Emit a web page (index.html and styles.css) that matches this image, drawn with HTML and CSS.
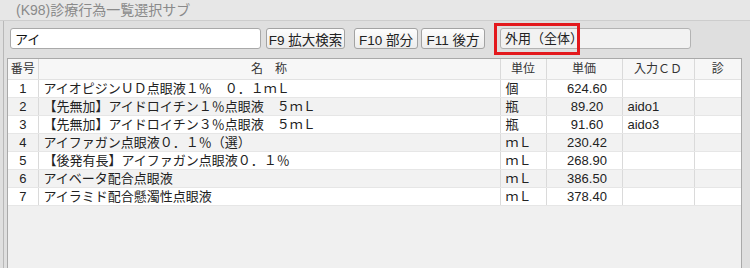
FILE: index.html
```html
<!DOCTYPE html>
<html lang="ja">

<head>
    <meta charset="UTF-8">
    <title>(K98)診療行為一覧選択サブ</title>
    <link rel="stylesheet" href="styles.css">
</head>

<body>
    <div class="window">
        <div class="titlebar">(K98)診療行為一覧選択サブ</div>
        <div class="main">
            <div class="toolbar">
                <input class="search" type="text" value="アイ">
                <button class="btn btn-f9">F9 拡大検索</button>
                <button class="btn btn-f10">F10 部分</button>
                <button class="btn btn-f11">F11 後方</button>
                <div class="scope">
                    <div class="scope-field">外用（全体）</div>
                    <div class="mark"></div>
                </div>
            </div>
            <div class="list">
                <table>
                    <colgroup>
                        <col class="c-no">
                        <col class="c-name">
                        <col class="c-unit">
                        <col class="c-price">
                        <col class="c-code">
                        <col class="c-shin">
                    </colgroup>
                    <thead>
                        <tr>
                            <th>番号</th>
                            <th>名　称</th>
                            <th>単位</th>
                            <th>単価</th>
                            <th>入力ＣＤ</th>
                            <th>診</th>
                        </tr>
                    </thead>
                    <tbody>
                        <tr>
                            <td class="no">1</td>
                            <td>アイオピジンＵＤ点眼液１％　０．１ｍＬ</td>
                            <td>個</td>
                            <td class="price">624.60</td>
                            <td></td>
                            <td></td>
                        </tr>
                        <tr>
                            <td class="no">2</td>
                            <td>【先無加】アイドロイチン１％点眼液　５ｍＬ</td>
                            <td>瓶</td>
                            <td class="price">89.20</td>
                            <td>aido1</td>
                            <td></td>
                        </tr>
                        <tr>
                            <td class="no">3</td>
                            <td>【先無加】アイドロイチン３％点眼液　５ｍＬ</td>
                            <td>瓶</td>
                            <td class="price">91.60</td>
                            <td>aido3</td>
                            <td></td>
                        </tr>
                        <tr>
                            <td class="no">4</td>
                            <td>アイファガン点眼液０．１％（選）</td>
                            <td>ｍＬ</td>
                            <td class="price">230.42</td>
                            <td></td>
                            <td></td>
                        </tr>
                        <tr>
                            <td class="no">5</td>
                            <td>【後発有長】アイファガン点眼液０．１％</td>
                            <td>ｍＬ</td>
                            <td class="price">268.90</td>
                            <td></td>
                            <td></td>
                        </tr>
                        <tr>
                            <td class="no">6</td>
                            <td>アイベータ配合点眼液</td>
                            <td>ｍＬ</td>
                            <td class="price">386.50</td>
                            <td></td>
                            <td></td>
                        </tr>
                        <tr>
                            <td class="no">7</td>
                            <td>アイラミド配合懸濁性点眼液</td>
                            <td>ｍＬ</td>
                            <td class="price">378.40</td>
                            <td></td>
                            <td></td>
                        </tr>
                    </tbody>
                </table>
            </div>
        </div>
    </div>
</body>

</html>
```

FILE: styles.css
```css
body {
    margin: 0;
    padding: 0;
    width: 750px;
    height: 268px;
    overflow: hidden;
    background-color: #dfdfdf;
    font-family: "Liberation Sans", "Noto Sans CJK JP", sans-serif;
    color: #222;
}

.window {
    display: flex;
    flex-direction: column;
    height: 268px;
}

.titlebar {
    height: 20px;
    line-height: 20px;
    padding-left: 16px;
    font-size: 14px;
    color: #8a8a8a;
    background-color: #e7e7e7;
    border-bottom: 1px solid #cdcdcd;
}

.main {
    flex: 1;
    display: flex;
    flex-direction: column;
    margin-left: 3px;
    border-left: 1px solid #b8b8b8;
    min-height: 0;
}

.toolbar {
    display: flex;
    align-items: center;
    height: 21px;
    margin-top: 7px;
    padding-left: 6px;
}

.search {
    box-sizing: border-box;
    width: 251px;
    height: 21px;
    margin: 0;
    padding: 0 4px;
    border: 1px solid #a9a9a9;
    border-radius: 3px;
    background-color: white;
    font-family: "Liberation Sans", "Noto Sans CJK JP", sans-serif;
    font-size: 13px;
    color: #111;
}

.btn {
    box-sizing: border-box;
    height: 21px;
    margin: 0;
    padding: 0;
    border: 1px solid #a3a3a3;
    border-radius: 3px;
    background: linear-gradient(#fdfdfd, #ececec);
    font-family: "Liberation Sans", "Noto Sans CJK JP", sans-serif;
    font-size: 13.5px;
    color: #222;
}

.btn-f9 {
    width: 79px;
    margin-left: 5px;
}

.btn-f10 {
    width: 64px;
    margin-left: 9px;
}

.btn-f11 {
    width: 64px;
    margin-left: 3px;
}

.scope {
    position: relative;
    margin-left: 15px;
}

.scope-field {
    box-sizing: border-box;
    width: 191px;
    height: 21px;
    line-height: 19px;
    padding-left: 4px;
    border: 1px solid #b3b3b3;
    border-radius: 3px;
    background-color: #f2f2f2;
    font-size: 13px;
    color: #222;
}

.mark {
    position: absolute;
    left: -6px;
    top: -5px;
    width: 86px;
    height: 32px;
    box-sizing: border-box;
    border: 3px solid #e3191d;
}

.list {
    flex: 1;
    margin: 9px 8px 0 3px;
    border: 1px solid #a9a9a9;
    border-bottom: none;
    background-color: #f0f0f0;
    overflow: hidden;
}

table {
    width: 733px;
    table-layout: fixed;
    border-collapse: collapse;
    font-size: 13px;
}

.c-no { width: 30px; }
.c-name { width: 462px; }
.c-unit { width: 46px; }
.c-price { width: 76px; }
.c-code { width: 72px; }
.c-shin { width: 47px; }

th {
    height: 20px;
    line-height: 20px;
    padding: 0;
    font-size: 12px;
    font-weight: normal;
    color: #333;
    background-color: #f7f7f7;
    border-left: 1px solid #dadada;
    border-bottom: 1px solid #e2e2e2;
}

th:first-child {
    border-left: none;
}

td {
    height: 17px;
    line-height: 17px;
    padding: 0 0 0 5px;
    white-space: nowrap;
    overflow: hidden;
    border-left: 1px solid #dadada;
    border-bottom: 1px solid #e6e6e6;
    background-color: white;
}

td:first-child {
    border-left: none;
}

tbody tr:nth-child(even) td {
    background-color: #f2f2f2;
}

td.no {
    padding: 0;
    text-align: center;
}

td.price {
    padding: 0 0 0 6px;
    text-align: center;
}
```
